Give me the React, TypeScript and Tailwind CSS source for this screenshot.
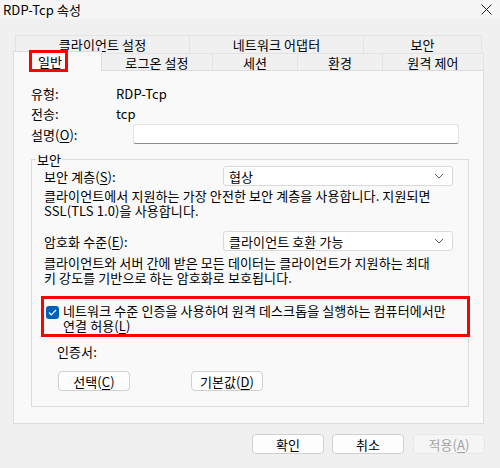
const font = "font-['Noto_Sans_CJK_KR','Noto_Sans',sans-serif]";

function U({ children }: { children: string }) {
  return <span className="underline underline-offset-2">{children}</span>;
}

function Select({ value }: { value: string }) {
  return (
    <div className="flex h-[20px] w-[230px] items-center justify-between rounded-[3px] border border-[#dadada] bg-white pl-[5px] pr-[8px]">
      <span>{value}</span>
      <svg width="10" height="6" viewBox="0 0 10 6" fill="none">
        <path d="M1 1l4 4 4-4" stroke="#606060" strokeWidth="1" />
      </svg>
    </div>
  );
}

function Btn({ children, disabled }: { children: React.ReactNode; disabled?: boolean }) {
  return (
    <div
      className={
        disabled
          ? 'flex h-[20px] w-[72px] items-center justify-center rounded-[4px] border border-[#e8e8e8] bg-[#f5f5f5] text-[#a3a3a3]'
          : 'flex h-[20px] w-[72px] items-center justify-center rounded-[4px] border border-[#d0d0d0] bg-[#fdfdfd]'
      }
    >
      {children}
    </div>
  );
}

export default function App() {
  return (
    <div className={`${font} flex h-[468px] w-[500px] flex-col bg-[#f0f0f0] text-[13px] leading-[15px] tracking-[0.1px] text-black`}>
      {/* Title bar */}
      <div className="flex h-[19px] items-center justify-between bg-[#f5f5f5] pl-[3px] pr-[8px]">
        <span>RDP-Tcp 속성</span>
        <svg width="11" height="11" viewBox="0 0 11 11" fill="none">
          <path d="M0.5 0.5l10 10M10.5 0.5l-10 10" stroke="#222" strokeWidth="1" />
        </svg>
      </div>

      {/* Tabs */}
      <div className="ml-[13px] mt-[16px] w-[471px]">
        <div className="ml-[2px] flex h-[18px] w-[467px]">
          {[
            ['클라이언트 설정', 'w-[174px]'],
            ['네트워크 어댑터', 'w-[174px]'],
            ['보안', 'flex-1'],
          ].map(([t, w]) => (
            <div key={t} className={`${w} flex items-center justify-center border-l border-t border-[#e3e3e3] last:border-r`}>
              {t}
            </div>
          ))}
        </div>
        <div className="flex h-[17px]">
          <div className="relative z-10 -mt-[2px] h-[20px] w-[89px] border-l border-r border-t border-[#dcdcdc] bg-[#f9f9f9]">
            {/* annotation box */}
            <div className="absolute -top-[2px] left-[15px] flex h-[22px] w-[39px] items-center border-[3px] border-[#ff0000] pl-[6px]">
              일반
            </div>
          </div>
          {[
            ['로그온 설정', 'w-[111px]'],
            ['세션', 'w-[85px]'],
            ['환경', 'w-[85px]'],
            ['원격 제어', 'flex-1'],
          ].map(([t, w]) => (
            <div key={t} className={`${w} flex items-center justify-center border-t border-r border-[#e3e3e3] bg-[#f0f0f0]`}>
              {t}
            </div>
          ))}
        </div>

        {/* Panel */}
        <div className="flex h-[354px] flex-col border border-[#dcdcdc] bg-[#f9f9f9] pl-[17px] pt-[15px]">
          <div className="flex h-[15px] items-center">
            <span className="w-[85px]">유형:</span>
            <span>RDP-Tcp</span>
          </div>
          <div className="mt-[5px] flex h-[15px] items-center">
            <span className="w-[85px]">전송:</span>
            <span>tcp</span>
          </div>
          <div className="mt-[3px] flex h-[20px] items-center">
            <span className="w-[102px]">
              설명(<U>O</U>):
            </span>
            <div className="h-[20px] w-[326px] rounded-[3px] border border-[#e2e2e2] border-b-[#8a8a8a] bg-white" />
          </div>

          {/* Group box */}
          <div className="relative mt-[15px] flex h-[248px] w-[438px] flex-col border border-[#dcdcdc] pl-[12px]">
            <span className="absolute -top-[8px] left-[4px] bg-[#f9f9f9] px-[1px]">보안</span>
            <div className="mt-[6px] flex h-[20px] items-center">
              <span className="w-[179px]">
                보안 계층(<U>S</U>):
              </span>
              <Select value="협상" />
            </div>
            <p className="mt-[2px]">
              클라이언트에서 지원하는 가장 안전한 보안 계층을 사용합니다. 지원되면
              <br />
              SSL(TLS 1.0)을 사용합니다.
            </p>
            <div className="mt-[13px] flex h-[20px] items-center">
              <span className="w-[179px]">
                암호화 수준(<U>E</U>):
              </span>
              <Select value="클라이언트 호환 가능" />
            </div>
            <p className="mt-[4px]">
              클라이언트와 서버 간에 받은 모든 데이터는 클라이언트가 지원하는 최대
              <br />
              키 강도를 기반으로 하는 암호화로 보호됩니다.
            </p>
            <div className="-ml-[3px] -mr-[2px] mt-[11px] flex h-[41px] gap-[4px] border-[3px] border-[#ff0000] pl-[2px] pt-[4px]">
              <div className="mt-[3px] flex h-[13px] w-[13px] shrink-0 items-center justify-center rounded-[3px] bg-[#005fb8]">
                <svg width="9" height="7" viewBox="0 0 9 7" fill="none">
                  <path d="M1 3.5l2.3 2.3L8 1" stroke="white" strokeWidth="1.2" />
                </svg>
              </div>
              <p>
                네트워크 수준 인증을 사용하여 원격 데스크톱을 실행하는 컴퓨터에서만
                <br />
                연결 허용(<U>L</U>)
              </p>
            </div>
            <div className="ml-[13px] mt-[7px]">인증서:</div>
            <div className="ml-[14px] mt-[12px] flex gap-[61px]">
              <Btn>
                선택(<U>C</U>)
              </Btn>
              <Btn>
                기본값(<U>D</U>)
              </Btn>
            </div>
          </div>
        </div>
      </div>

      {/* Bottom buttons */}
      <div className="ml-[252px] mt-[10px] flex gap-[8px]">
        <Btn>확인</Btn>
        <Btn>취소</Btn>
        <div className="ml-[1px]">
          <Btn disabled>
            적용(<U>A</U>)
          </Btn>
        </div>
      </div>
    </div>
  );
}
